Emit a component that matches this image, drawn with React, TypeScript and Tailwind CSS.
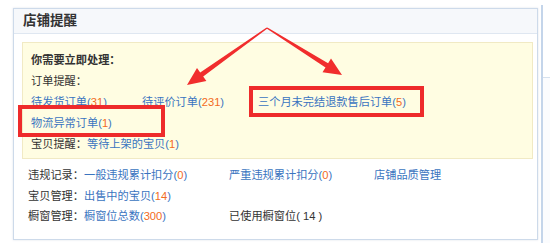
import React from "react";

const Num = ({ n }: { n: string }) => <span className="text-[#f26b1d]">{n}</span>;

const Link = ({ text, n }: { text: string; n?: string }) => (
  <span className="text-[#3a74c0]">
    {text}
    {n !== undefined && (
      <>
        (<Num n={n} />)
      </>
    )}
  </span>
);

export default function App() {
  return (
    <div
      className="relative w-[550px] h-[252px] bg-white overflow-hidden text-[11.2px] text-[#333]"
      style={{ fontFamily: '"Liberation Sans", "Noto Sans CJK SC", sans-serif' }}
    >
      <div className="flex items-start">
        {/* main panel */}
        <div className="ml-[13px] mt-[8px] w-[525px] h-[232px] border border-[#cddaea] bg-white flex flex-col shadow-[0_0_2px_rgba(120,140,170,0.25)]">
          <div className="h-[25px] shrink-0 bg-[#f6f8fb] border-b border-[#dfe7f1] pl-[9px] flex items-center text-[13.5px] font-bold text-[#333]">
            店铺提醒
          </div>
          <div className="mt-[8px] ml-[8px] mr-[4px] border border-[#f1eac4] bg-[#fffde2] pl-[8px] pt-[7px] pb-[3px] leading-[21px]">
            <div className="h-[21px] font-bold">你需要立即处理：</div>
            <div className="h-[21px]">订单提醒：</div>
            <div className="h-[21px] flex">
              <div className="w-[111px] whitespace-nowrap">
                <Link text="待发货订单" n="31" />
              </div>
              <div className="w-[116px] whitespace-nowrap">
                <Link text="待评价订单" n="231" />
              </div>
              <div className="whitespace-nowrap">
                <Link text="三个月未完结退款售后订单" n="5" />
              </div>
            </div>
            <div className="h-[21px]">
              <Link text="物流异常订单" n="1" />
            </div>
            <div className="h-[21px] whitespace-nowrap">
              宝贝提醒：<Link text="等待上架的宝贝" n="1" />
            </div>
          </div>
          <div className="mt-[6px] pl-[14px] leading-[20.5px]">
            <div className="flex h-[20.5px] whitespace-nowrap">
              <div className="w-[201px]">
                违规记录：<Link text="一般违规累计扣分" n="0" />
              </div>
              <div className="w-[145px]">
                <Link text="严重违规累计扣分" n="0" />
              </div>
              <div>
                <Link text="店铺品质管理" />
              </div>
            </div>
            <div className="flex h-[20.5px] whitespace-nowrap">
              <div className="w-[201px]">
                宝贝管理：<Link text="出售中的宝贝" n="14" />
              </div>
            </div>
            <div className="flex h-[20.5px] whitespace-nowrap">
              <div className="w-[201px]">
                橱窗管理：<Link text="橱窗位总数" n="300" />
              </div>
              <div className="w-[145px]">已使用橱窗位( 14 )</div>
            </div>
          </div>
        </div>
        {/* neighbouring panel sliver */}
        <div className="ml-[3px] mt-[5px] h-[238px] flex-1 border-l-2 border-[#c4d5ea] bg-[#fbfcfe]">
          <div className="h-[73px] border-b border-[#d6e1ee] bg-white" />
        </div>
      </div>

      {/* annotation arrows */}
      <svg
        className="absolute left-0 top-0 pointer-events-none"
        width="550"
        height="252"
        viewBox="0 0 550 252"
      >
        <polygon
          fill="#f12d2d"
          points="266.6,27.4 200.2,72.5 197,68 187,85 206.4,81 203.2,76.5 267.4,28.6"
        />
        <polygon
          fill="#f12d2d"
          points="267.4,27.4 328.1,63.3 331,58.6 342,75 322.5,72.2 325.5,67.5 266.6,28.6"
        />
      </svg>

      {/* annotation boxes */}
      <div className="absolute left-[249px] top-[86px] w-[175px] h-[31px] border-[4px] border-[#ee2b2b] pointer-events-none" />
      <div className="absolute left-[18px] top-[105px] w-[147px] h-[32px] border-[4px] border-[#ee2b2b] pointer-events-none" />
    </div>
  );
}
